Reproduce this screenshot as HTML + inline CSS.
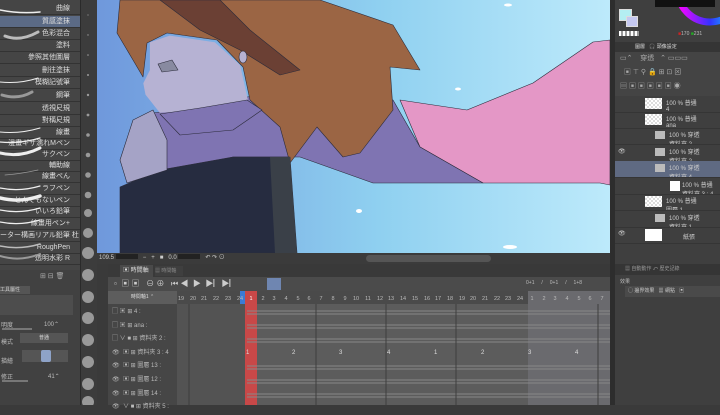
<!DOCTYPE html>
<html><head><meta charset="utf-8"><style>
*{margin:0;padding:0;box-sizing:border-box}
body{width:720px;height:405px;overflow:hidden;background:#3a3a3a;font-family:"Liberation Sans","Noto Sans CJK TC",sans-serif;color:#ddd;position:relative}
.a{position:absolute}
.bl{position:absolute;left:0;width:80px;height:12px;font-size:7px;text-align:right;padding-right:10px;line-height:12px;color:#ddd;border-bottom:1px solid #333;white-space:nowrap;overflow:hidden}
.tl{font-size:6px;color:#bbb}
.lay{position:absolute;left:615px;width:105px;height:16.5px;border-bottom:1px solid #353535;font-size:6px;color:#ccc;overflow:hidden}
</style></head><body>
<div class="a" style="left:0;top:0;width:80px;height:270px;background:#454545"></div>
<div class="bl" style="top:3px">曲線</div>
<div class="bl" style="top:16px;background:#5b6a85">質感塗抹</div>
<div class="bl" style="top:28px">色彩混合</div>
<div class="bl" style="top:40px">塗料</div>
<div class="bl" style="top:52px">參照其他圖層</div>
<div class="bl" style="top:65px">刪往塗抹</div>
<div class="bl" style="top:77px">模糊記號筆</div>
<div class="bl" style="top:90px">鋼筆</div>
<div class="bl" style="top:103px">透視尺規</div>
<div class="bl" style="top:115px">對稱尺規</div>
<div class="bl" style="top:127px">線畫</div>
<div class="bl" style="top:138px">漫畫ギザ濡れMペン</div>
<div class="bl" style="top:149px">サクペン</div>
<div class="bl" style="top:160px">輔助線</div>
<div class="bl" style="top:171px">線畫ぺん</div>
<div class="bl" style="top:183px">ラフペン</div>
<div class="bl" style="top:195px">とんでもないペン</div>
<div class="bl" style="top:206px">いいろ鉛筆</div>
<div class="bl" style="top:218px">線畫用ペン+</div>
<div class="bl" style="top:230px">ーター構画リアル鉛筆 杜</div>
<div class="bl" style="top:242px">RoughPen</div>
<div class="bl" style="top:253px">透明水彩 R</div>
<svg class="a" style="left:0;top:0" width="80" height="270">
<g stroke="#eee" fill="none" stroke-linecap="round">
<path d="M0 10 Q20 14 40 12" stroke-width="1.5"/>
<path d="M5 36 Q20 42 38 32" stroke-width="3" stroke="#bbb"/>
<path d="M0 82 Q20 84 38 78" stroke-width="1"/>
<path d="M2 95 Q18 100 32 92" stroke-width="3" stroke="#999"/>
<path d="M0 132 Q20 134 40 128" stroke-width="1"/>
<path d="M0 142 Q20 144 40 138" stroke-width="1.2"/>
<path d="M0 153 Q20 158 40 148" stroke-width="3"/>
<path d="M5 175 Q20 174 38 170" stroke-width="0.8" stroke="#999"/>
<path d="M0 188 Q20 192 40 186" stroke-width="1.2"/>
<path d="M0 198 Q20 203 40 196" stroke-width="3.5"/>
<path d="M0 210 Q20 214 40 208" stroke-width="1.2"/>
<path d="M0 222 Q20 226 40 220" stroke-width="1.2"/>
<path d="M0 246 Q20 250 40 244" stroke-width="1.5" stroke="#bbb"/>
<path d="M0 256 Q20 262 40 254" stroke-width="2" stroke="#999"/>
</g></svg>
<div class="a" style="left:80px;top:0;width:17px;height:405px;background:#3c3c3c;border-left:1px solid #2a2a2a"></div>
<svg class="a" style="left:80px;top:0" width="17" height="405"><g fill="#999">
<circle cx="8" cy="15" r="0.6"/><circle cx="8" cy="35" r="0.7"/><circle cx="8" cy="55" r="0.8"/><circle cx="8" cy="75" r="1"/><circle cx="8" cy="95" r="1.2"/><circle cx="8" cy="115" r="1.4"/><circle cx="8" cy="135" r="1.8"/><circle cx="8" cy="155" r="2.3"/><circle cx="8" cy="175" r="2.8"/><circle cx="8" cy="195" r="3.3"/><circle cx="8" cy="213" r="4"/><circle cx="8" cy="233" r="5"/><circle cx="8" cy="253" r="6"/><circle cx="8" cy="275" r="6"/><circle cx="8" cy="297" r="6"/><circle cx="8" cy="318" r="6"/><circle cx="8" cy="340" r="6"/><circle cx="8" cy="362" r="6"/><circle cx="8" cy="384" r="6"/><circle cx="8" cy="402" r="6"/></g></svg>
<div class="a" style="left:0;top:270px;width:80px;height:135px;background:#414141"></div>
<div class="a tl" style="left:40px;top:272px;font-size:7px;color:#aaa">⊞ ⊟ 🗑</div>
<div class="a" style="left:0;top:286px;width:30px;height:8px;background:#555;font-size:5px;color:#ccc;line-height:8px">工具屬性</div>
<div class="a" style="left:0;top:295px;width:73px;height:20px;background:#4d4d4d"></div>
<div class="a tl" style="left:1px;top:320px">明度</div><div class="a tl" style="left:44px;top:321px">100⌃</div>
<div class="a" style="left:2px;top:328px;width:30px;height:2px;background:#777"></div>
<div class="a tl" style="left:1px;top:337px">模式</div>
<div class="a" style="left:20px;top:333px;width:48px;height:10px;background:#555;font-size:5px;text-align:center;line-height:10px">普通</div>
<div class="a tl" style="left:1px;top:356px">描繪</div>
<div class="a" style="left:22px;top:350px;width:46px;height:12px;background:#555"></div>
<div class="a" style="left:41px;top:350px;width:10px;height:12px;background:#8ea3c8;border-radius:2px"></div>
<div class="a tl" style="left:1px;top:372px">修正</div><div class="a tl" style="left:48px;top:373px">41⌃</div>
<div class="a" style="left:2px;top:380px;width:26px;height:2px;background:#777"></div>
<!-- canvas -->
<svg class="a" style="left:97px;top:0" width="513" height="253" viewBox="97 0 513 253">
<defs><linearGradient id="sky" x1="0" y1="0" x2="1" y2="0"><stop offset="0" stop-color="#6f98dc"/><stop offset="0.55" stop-color="#8fd0f0"/><stop offset="1" stop-color="#bdeafb"/></linearGradient></defs>
<rect x="97" y="0" width="513" height="253" fill="url(#sky)"/>
<g stroke="#2b2b3a" stroke-width="0.6" stroke-linejoin="round">
<path d="M400 100 L467 110 L533 83 L593 42 L610 40 L610 185 L600 183 L483 183 L420 147 Z" fill="#e497c6"/>
<path d="M153 113 L200 107 L247 97 L300 90 L393 100 L420 147 L483 183 L373 183 L300 157 L233 157 L167 173 L157 140 Z" fill="#7f74b2"/>
<path d="M120 0 L320 0 L393 25 L420 70 L390 67 L393 110 L360 153 L343 157 L317 127 L290 163 L280 127 L250 100 L243 67 L217 40 L167 33 L147 43 L143 77 L133 60 L117 33 Z" fill="#9b6544"/>
<path d="M160 0 L220 0 L250 30 L300 70 L280 75 L240 50 L200 30 Z" fill="#6b4034"/>
</g>
</svg>
<div class="a" style="left:140px;top:34px;width:110px;height:82px;background:#b6b2d3;clip-path:polygon(9% 10%,27% 2%,68% 10%,91% 38%,98% 80%,85% 85%,55% 93%,18% 96%,5% 74%,3% 60%,9% 44%)"></div>
<svg class="a" style="left:0;top:0" width="610" height="253">
<g stroke="#2b2b3a" stroke-width="0.6" stroke-linejoin="round">
<polygon points="160,114 200,108 247,100 262,110 233,130 180,135" fill="#7f74b2"/>
<polygon points="120,187 160,170 233,157 290,157 297,253 120,253" fill="#262c40"/>
<polygon points="270,157 290,157 297,253 275,253" fill="#3a4048" stroke="none"/>
<polygon points="120,160 133,120 153,110 167,140 167,170 127,183" fill="#a5a3c6"/>
<ellipse cx="243" cy="57" rx="4" ry="6" fill="#b6b2d3"/>
<path d="M158 64 L172 60 L178 70 L162 72 Z" fill="#888aa0"/>
</g>
<ellipse cx="458" cy="89" rx="3" ry="1.5" fill="#fff"/><ellipse cx="508" cy="5" rx="4" ry="1.5" fill="#fff"/><ellipse cx="359" cy="211" rx="3" ry="2" fill="#fff"/><ellipse cx="510" cy="247" rx="7" ry="2" fill="#fff"/>
</svg>
<div class="a" style="left:97px;top:253px;width:513px;height:11px;background:#3b3b3b;font-size:6px;line-height:11px;color:#ccc;padding-left:2px;white-space:nowrap">109.5 <span style="display:inline-block;width:22px;height:5px;background:#222"></span> &nbsp; − &nbsp; + &nbsp; ■ &nbsp; 0.0 <span style="display:inline-block;width:22px;height:5px;background:#222"></span> &nbsp; ↶ ↷ ⊙</div>
<div class="a" style="left:366px;top:255px;width:125px;height:7px;background:#555;border-radius:4px"></div>
<!-- timeline -->
<div class="a" style="left:97px;top:264px;width:11px;height:141px;background:#3a3a3a"></div>
<div class="a" style="left:108px;top:264px;width:502px;height:13px;background:#393939"></div>
<div class="a" style="left:120px;top:265px;width:33px;height:12px;background:#4a4a4a;font-size:6px;line-height:12px;padding-left:3px">▣ 時間軸</div>
<div class="a" style="left:155px;top:266px;width:28px;height:10px;background:#3f3f3f;font-size:5px;line-height:10px;color:#888">▦ 時間軸</div>
<div class="a" style="left:108px;top:277px;width:502px;height:14px;background:#4b4b4b;font-size:8px;color:#ccc;line-height:14px;padding-left:6px;white-space:pre">▫  ▣ ▣   ⊖ ⊕   ⏮ ◀  ▶  ▶▏▶▏</div>
<div class="a" style="left:267px;top:278px;width:14px;height:12px;background:#6f86b1"></div>
<div class="a tl" style="left:526px;top:280px;font-size:5px;white-space:pre">0+1     /     0+1     /     1+8</div>
<div class="a" style="left:108px;top:291px;width:69px;height:13px;background:#5d5d5d;font-size:5px;text-align:center;line-height:13px">時間軸1 ⌃</div>
<div class="a" style="left:177px;top:291px;width:433px;height:13px;background:#4a4a4a"></div>
<div class="a" style="left:528px;top:291px;width:82px;height:114px;background:#6a6a6e"></div>
<div class="a" style="left:177px;top:304px;width:68px;height:101px;background:#535353"></div>
<div class="a" style="left:257px;top:304px;width:271px;height:101px;background:#5c5c5c"></div>
<div class="a" style="left:240px;top:291px;width:5px;height:13px;background:#3a7bd5"></div>
<div class="a" style="left:245px;top:291px;width:12px;height:114px;background:#c84848"></div>
<svg class="a" style="left:0;top:291px" width="610" height="13"><g fill="#bbb" font-size="5.5" font-family="Liberation Sans" text-anchor="middle">
<text x="181" y="9">19</text><text x="193" y="9">20</text><text x="204" y="9">21</text><text x="216" y="9">22</text><text x="228" y="9">23</text><text x="240" y="9">24</text>
<text x="251" y="9" fill="#fff">1</text><text x="263" y="9">2</text><text x="274" y="9">3</text><text x="286" y="9">4</text><text x="298" y="9">5</text><text x="309" y="9">6</text><text x="321" y="9">7</text><text x="333" y="9">8</text><text x="345" y="9">9</text><text x="356" y="9">10</text><text x="368" y="9">11</text><text x="380" y="9">12</text><text x="391" y="9">13</text><text x="403" y="9">14</text><text x="415" y="9">15</text><text x="427" y="9">16</text><text x="438" y="9">17</text><text x="450" y="9">18</text><text x="462" y="9">19</text><text x="473" y="9">20</text><text x="485" y="9">21</text><text x="497" y="9">22</text><text x="508" y="9">23</text><text x="520" y="9">24</text>
<text x="532" y="9">1</text><text x="544" y="9">2</text><text x="555" y="9">3</text><text x="567" y="9">4</text><text x="579" y="9">5</text><text x="590" y="9">6</text><text x="602" y="9">7</text></g></svg>
<div class="a" style="left:108px;top:304px;width:69px;height:101px;background:#464646"></div>
<div class="a tl" style="left:112px;top:306px;line-height:13.6px;white-space:pre">▢ ▣ ⊞ 4 :
▢ ▣ ⊞ ana :
▢ ∨ ■ ⊞ 資料夾 2 :
👁  ▣ ⊞ 資料夾 3 : 4
👁  ▣ ⊞ 圖層 13 :
👁  ▣ ⊞ 圖層 12 :
👁  ▣ ⊞ 圖層 14 :
👁  ∨ ■ ⊞ 資料夾 5 :</div>
<svg class="a" style="left:177px;top:304px" width="433" height="101"><g stroke="#888" stroke-width="1">
<line x1="70" y1="7" x2="433" y2="7"/><line x1="70" y1="10" x2="433" y2="10"/>
<line x1="70" y1="21" x2="433" y2="21"/><line x1="70" y1="24" x2="433" y2="24"/>
<line x1="70" y1="35" x2="433" y2="35"/><line x1="70" y1="38" x2="433" y2="38"/>
<line x1="70" y1="62" x2="433" y2="62"/><line x1="70" y1="65" x2="433" y2="65"/>
<line x1="70" y1="76" x2="433" y2="76"/><line x1="70" y1="79" x2="433" y2="79"/>
<line x1="70" y1="90" x2="433" y2="90"/><line x1="70" y1="93" x2="433" y2="93"/>
</g><g stroke="#3e3e3e"><line x1="12" y1="0" x2="12" y2="101"/><line x1="139" y1="0" x2="139" y2="101"/><line x1="209" y1="0" x2="209" y2="101"/><line x1="279" y1="0" x2="279" y2="101"/><line x1="421" y1="0" x2="421" y2="101"/></g>
<g fill="#ddd" font-size="6" font-family="Liberation Sans"><text x="69" y="50">1</text><text x="115" y="50">2</text><text x="162" y="50">3</text><text x="210" y="50">4</text><text x="257" y="50">1</text><text x="304" y="50">2</text><text x="351" y="50">3</text><text x="398" y="50">4</text></g></svg>
<!-- right panel -->
<div class="a" style="left:610px;top:0;width:5px;height:405px;background:#2d2d2d"></div>
<div class="a" style="left:615px;top:0;width:105px;height:405px;background:#3f3f3f"></div>
<svg class="a" style="left:615px;top:0" width="105" height="45"><defs><linearGradient id="g2"><stop offset="0" stop-color="#f0f"/><stop offset="0.5" stop-color="#33f"/><stop offset="1" stop-color="#0ff"/></linearGradient></defs><circle cx="95" cy="-10" r="32" fill="none" stroke="url(#g2)" stroke-width="7"/><rect x="40" y="0" width="60" height="7" fill="#111"/></svg>
<div class="a" style="left:619px;top:9px;width:13px;height:12px;background:#b4eef2;border:1px solid #ddd"></div>
<div class="a" style="left:626px;top:16px;width:12px;height:11px;background:#c5c8f0;border:1px solid #ddd"></div>
<div class="a" style="left:619px;top:31px;width:20px;height:5px;background:repeating-linear-gradient(90deg,#fff 0 2px,#999 2px 4px)"></div>
<div class="a tl" style="left:678px;top:31px;font-size:5px;white-space:nowrap"><span style="color:#c22">■</span>170 <span style="color:#2a2">■</span>231</div>
<div class="a" style="left:615px;top:42px;width:105px;height:10px;background:#353535;font-size:5px;line-height:10px;padding-left:20px;white-space:nowrap;overflow:hidden">圖層 &nbsp; 🎧 頭像設定</div>
<div class="a" style="left:615px;top:52px;width:105px;height:44px;background:#444;font-size:7px;color:#aaa;line-height:14px;padding-left:5px;white-space:pre;overflow:hidden">▭⌃    穿透   ⌃ ▭▭▭
  ▣ ⊤ ⚲ 🔒 ⊞ ⊡ ⊠
▤ ▣ ▣ ▣ ▣ ▣ ◉</div>
<div class="lay" style="top:96px"><span class="a" style="left:30px;top:2px;width:17px;height:11px;background:repeating-conic-gradient(#ddd 0 25%,#fff 0 50%) 0 0/4px 4px"></span><span class="a" style="left:51px;top:2px">100 % 普通<br>4</span></div>
<div class="lay" style="top:112px"><span class="a" style="left:30px;top:2px;width:17px;height:11px;background:repeating-conic-gradient(#ddd 0 25%,#fff 0 50%) 0 0/4px 4px"></span><span class="a" style="left:51px;top:2px">100 % 普通<br>ana</span></div>
<div class="lay" style="top:128px"><span class="a" style="left:40px;top:3px;width:10px;height:8px;background:#bbb"></span><span class="a" style="left:54px;top:2px">100 % 穿透<br>資料夾 2</span></div>
<div class="lay" style="top:145px"><span class="a" style="left:3px;top:3px">👁</span><span class="a" style="left:40px;top:3px;width:10px;height:8px;background:#bbb"></span><span class="a" style="left:54px;top:2px">100 % 穿透<br>資料夾 2</span></div>
<div class="lay" style="top:161px;background:#5f6a82"><span class="a" style="left:40px;top:3px;width:10px;height:8px;background:#bbb"></span><span class="a" style="left:54px;top:2px">100 % 穿透<br>資料夾 4</span></div>
<div class="lay" style="top:178px"><span class="a" style="left:55px;top:3px;width:10px;height:10px;background:#fff"></span><span class="a" style="left:67px;top:2px">100 % 普通<br>資料夾 3 : 4</span></div>
<div class="lay" style="top:194px"><span class="a" style="left:30px;top:2px;width:17px;height:11px;background:repeating-conic-gradient(#ddd 0 25%,#fff 0 50%) 0 0/4px 4px"></span><span class="a" style="left:51px;top:2px">100 % 普通<br>圖層 1</span></div>
<div class="lay" style="top:211px"><span class="a" style="left:40px;top:3px;width:10px;height:8px;background:#bbb"></span><span class="a" style="left:54px;top:2px">100 % 穿透<br>資料夾 1</span></div>
<div class="lay" style="top:227px"><span class="a" style="left:3px;top:3px">👁</span><span class="a" style="left:30px;top:2px;width:17px;height:12px;background:#fff"></span><span class="a" style="left:68px;top:5px">紙張</span></div>
<div class="a" style="left:615px;top:264px;width:105px;height:11px;background:#353535;font-size:5px;line-height:11px;color:#999;padding-left:10px;white-space:nowrap;overflow:hidden">▦ 自動動作 ⤺ 歷史記錄</div>
<div class="a tl" style="left:620px;top:278px;font-size:5px">效果</div>
<div class="a" style="left:625px;top:286px;width:95px;height:11px;background:#4a4a4a;font-size:5px;line-height:11px;padding-left:3px;color:#ccc;white-space:nowrap;overflow:hidden">◯ 邊界效果 &nbsp; ▦ 網點 &nbsp; ▣</div>
</body></html>
